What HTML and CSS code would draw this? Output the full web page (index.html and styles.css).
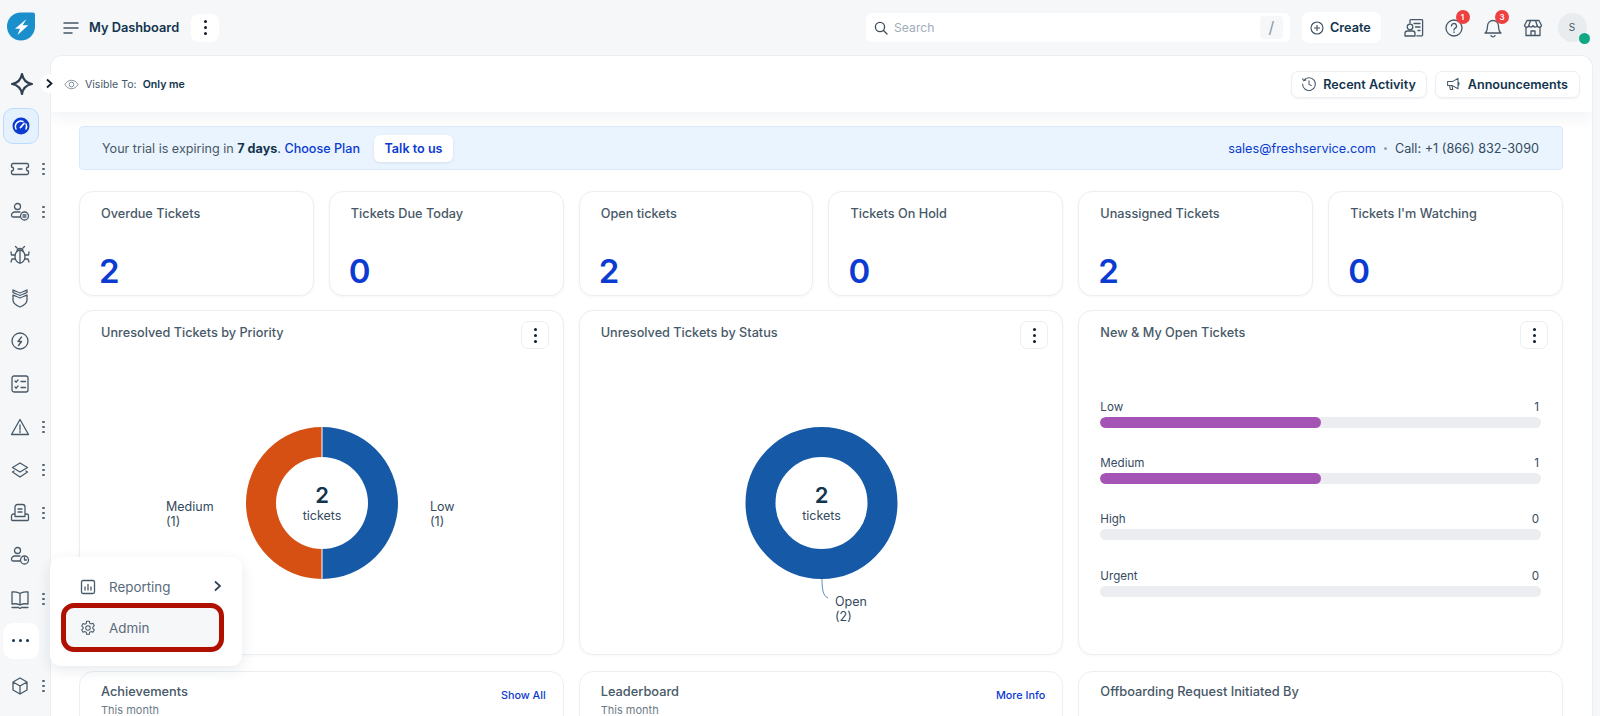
FILE: index.html
```html
<!DOCTYPE html>
<html lang="en">
<head>
<meta charset="utf-8">
<title>My Dashboard</title>
<link rel="stylesheet" href="styles.css">
</head>
<body>
<div class="app">
  <aside class="sidebar">
    <div class="logo-wrap">
      <svg width="28" height="29" viewBox="0 0 28 28"><path d="M14 0h12a2 2 0 0 1 2 2v12A14 14 0 1 1 14 0z" fill="#1a8fcb"/><path d="M19.500 6.500L8 16.300h5l-2.500 6.200L21.300 12.800h-5.600z" fill="#fff"/></svg>
    </div>
    <nav class="nav">
      <div class="nav-item"><svg class="ic" width="24" height="24" viewBox="0 0 24 24"><path d="M12 2c1 6 4 9 10 10-6 1-9 4-10 10-1-6-4-9-10-10 6-1 9-4 10-10z" fill="none" stroke="#2f3f4f" stroke-width="2.200" stroke-linejoin="round"/></svg></div>
      <div class="nav-item active"><svg width="20" height="20" viewBox="0 0 20 20"><circle cx="10" cy="10" r="8.500" fill="#0b3bd0"/><path d="M5 13a5.500 5.500 0 0 1 7-7.500M15 8a5.500 5.500 0 0 1 0 5" fill="none" stroke="#fff" stroke-width="1.500" stroke-linecap="round"/><path d="M9.500 11.500l3.500-4" stroke="#fff" stroke-width="1.800" stroke-linecap="round"/></svg></div>
      <div class="nav-item more"><svg class="ic" width="20" height="20" viewBox="0 0 20 20"><path d="M3 4.500h14a1.500 1.500 0 0 1 1.500 1.500v2a2 2 0 0 0 0 4v2a1.500 1.500 0 0 1-1.500 1.500H3A1.500 1.500 0 0 1 1.500 14v-2a2 2 0 0 0 0-4V6A1.500 1.500 0 0 1 3 4.500zM8 10h4"/></svg><span class="dots"></span></div>
      <div class="nav-item more"><svg class="ic" width="20" height="20" viewBox="0 0 20 20"><circle cx="7.500" cy="4.500" r="3"/><path d="M10 10H5a3.500 3.500 0 0 0-3.500 3.500c0 1 .6 1.500 1.500 1.500h7"/><circle cx="14.500" cy="14" r="4"/><path d="M13 13h3M13 15h3"/></svg><span class="dots"></span></div>
      <div class="nav-item"><svg class="ic" width="20" height="20" viewBox="0 0 20 20"><ellipse cx="10" cy="11.500" rx="5" ry="6.500"/><path d="M7 6.500a3 3 0 0 1 6 0M10 5.500v12.500M5 10H1.500L1 7M15 10h3.500L19 7M5 14H2l-1 3M15 14h3l1 3M7 3L5.500 1.500M13 3l1.500-1.500"/></svg></div>
      <div class="nav-item"><svg class="ic" width="20" height="20" viewBox="0 0 20 20"><path d="M3 7v5c0 3 3 5.500 7 7 4-1.500 7-4 7-7V7c-2 1-5 2-7 3-2-1-5-2-7-3zM3 2c2 1 5 2 7 3 2-1 5-2 7-3v2.500c-2 1-5 2-7 3-2-1-5-2-7-3z"/></svg></div>
      <div class="nav-item"><svg class="ic" width="20" height="20" viewBox="0 0 20 20"><circle cx="10" cy="10" r="8"/><path d="M11.500 6L8 10.500h3.500L8.500 14.500"/></svg></div>
      <div class="nav-item"><svg class="ic" width="20" height="20" viewBox="0 0 20 20"><rect x="2" y="2" width="16" height="16" rx="2"/><path d="M5 7l1.200 1.200L8 6M5 13l1.200 1.200L8 12M11 7.500h4.500M11 13.500h4.500"/></svg></div>
      <div class="nav-item more"><svg class="ic" width="20" height="20" viewBox="0 0 20 20"><path d="M10 2.500L1.500 17.500h17zM10 8v5M10 14.500v1"/></svg><span class="dots"></span></div>
      <div class="nav-item more"><svg class="ic" width="20" height="20" viewBox="0 0 20 20"><path d="M10 3l7.500 4.500L10 12 2.500 7.500zM4 11l-1.500 1 7.500 5 7.500-5-1.500-1"/></svg><span class="dots"></span></div>
      <div class="nav-item more"><svg class="ic" width="20" height="20" viewBox="0 0 20 20"><path d="M5 13V4a2.500 2.500 0 0 1 2.500-2.500h5A2.500 2.500 0 0 1 15 4v9M8 6h4M8 9h4M5 11H3.500A2 2 0 0 0 1.500 13v3.500a1 1 0 0 0 1 1h15a1 1 0 0 0 1-1V13a2 2 0 0 0-2-2H15M5 13.500h10"/></svg><span class="dots"></span></div>
      <div class="nav-item"><svg class="ic" width="20" height="20" viewBox="0 0 20 20"><circle cx="7.500" cy="4.500" r="3"/><path d="M10 10H5a3.500 3.500 0 0 0-3.500 3.500c0 1 .6 1.500 1.500 1.500h7"/><circle cx="14.500" cy="14" r="4"/><path d="M14.500 11.500V14h2"/></svg></div>
      <div class="nav-item more"><svg class="ic" width="20" height="20" viewBox="0 0 20 20"><path d="M10 4.500C8 3 5 2.500 2 3v12c3-.5 6 0 8 1 2-1 5-1.500 8-1V3c-3-.5-6 0-8 1.500zM10 4.500V16M2 18.500h6.500l1.500 1 1.500-1H18"/></svg><span class="dots"></span></div>
      <div class="nav-item current"><span class="hdots"><i></i><i></i><i></i></span></div>
      <div class="nav-item more"><svg class="ic" width="20" height="20" viewBox="0 0 20 20"><path d="M10 2l7 4v8l-7 4-7-4V6zM3 6l7 4 7-4M10 10v8"/></svg><span class="dots"></span></div>
    </nav>
  </aside>

  <div class="right">
    <header class="topbar">
      <svg class="burger" width="16" height="14" viewBox="0 0 16 14"><path d="M1 2h14M1 7h14M1 12h8" fill="none" stroke="#475867" stroke-width="1.500" stroke-linecap="round"/></svg>
      <div class="page-title">My Dashboard</div>
      <button class="kebab-btn plain"><span class="dots dark"></span></button>
      <div class="search">
        <svg width="14" height="14" viewBox="0 0 14 14"><circle cx="6" cy="6" r="4.600" fill="none" stroke="#3d4d5c" stroke-width="1.300"/><path d="M9.500 9.500L13 13" stroke="#3d4d5c" stroke-width="1.300" stroke-linecap="round"/></svg>
        <span class="search-ph">Search</span>
        <span class="slash">/</span>
      </div>
      <button class="create">
        <svg width="14" height="14" viewBox="0 0 14 14"><circle cx="7" cy="7" r="6" fill="none" stroke="#3d4d5c" stroke-width="1.100"/><path d="M7 4v6M4 7h6" stroke="#3d4d5c" stroke-width="1.100"/></svg>
        Create
      </button>
      <div class="top-icons">
        <span class="top-ic"><svg class="ic" width="20" height="20" viewBox="0 0 20 20"><path d="M6 5V2.500a.8.800 0 0 1 .8-.8h11a.8.800 0 0 1 .8.800v14.500a.8.800 0 0 1-.8.800h-5M10 5.500h6M11.500 9h4.500M14 12.500h2"/><circle cx="6" cy="9" r="2.800"/><path d="M1 18v-2.500A2.500 2.500 0 0 1 3.500 13h5a2.500 2.500 0 0 1 2.500 2.500V18z"/></svg></span>
        <span class="top-ic"><svg class="ic" width="20" height="20" viewBox="0 0 20 20"><circle cx="10" cy="10" r="8"/><path d="M7.500 8a2.500 2.500 0 1 1 3.500 2.300c-.7.300-1 .8-1 1.700M10 14v.6"/></svg><b class="badge">1</b></span>
        <span class="top-ic"><svg class="ic" width="20" height="20" viewBox="0 0 20 20"><path d="M10 2.500a5.500 5.500 0 0 0-5.500 5.500c0 5-2.500 7-2.500 7h16s-2.500-2-2.500-7A5.500 5.500 0 0 0 10 2.500zM8 17.500a2.200 2.200 0 0 0 4 0"/></svg><b class="badge">3</b></span>
        <span class="top-ic"><svg class="ic" width="20" height="20" viewBox="0 0 20 20"><path d="M4 2.500h12l2.500 5a2.200 2.200 0 0 1-4.300 0 2.200 2.200 0 0 1-4.200 0 2.200 2.200 0 0 1-4.200 0 2.200 2.200 0 0 1-4.300 0zM3 10v7.500h14V10M8 17.500V13h4v4.500M7.500 2.500L5.800 7.500M12.500 2.500l1.700 5"/></svg></span>
      </div>
      <div class="avatar">S<i class="online"></i></div>
    </header>

    <main class="panel">
      <div class="panel-head">
        <svg width="15" height="15" viewBox="0 0 16 16"><path d="M1 8c1.800-3 4.200-4.500 7-4.500S13.200 5 15 8c-1.800 3-4.200 4.500-7 4.500S2.800 11 1 8z" fill="none" stroke="#7b8a98" stroke-width="1"/><circle cx="8" cy="8" r="2.500" fill="none" stroke="#7b8a98" stroke-width="1"/></svg>
        <span class="vis-label">Visible To:</span>
        <span class="vis-value">Only me</span>
        <button class="head-btn first">
          <svg class="ic" width="16" height="16" viewBox="0 0 20 20"><path d="M3.500 5.500A8 8 0 1 1 2 10M2 3.500l1.500 2.500 2.500-1M10 6v4.500l3 1.500"/></svg>
          Recent Activity
        </button>
        <button class="head-btn">
          <svg class="ic" width="16" height="16" viewBox="0 0 20 20"><path d="M2 7h6l7-4v13l-7-4H2zM4.500 12l1 5h3l-1-5M15 7.500a2.500 2.500 0 0 1 0 4.500"/></svg>
          Announcements
        </button>
      </div>

      <div class="content">
        <section class="trial">
          <span class="trial-text">Your trial is expiring in <b>7 days</b>. <a class="blue-link">Choose Plan</a></span>
          <button class="talk">Talk to us</button>
          <span class="trial-right"><a class="sales">sales@freshservice.com</a><i class="sep"></i><span>Call: +1 (866) 832-3090</span></span>
        </section>

        <section class="kpis">
          <div class="kpi"><div class="kpi-title">Overdue Tickets</div><div class="kpi-num">2</div></div>
          <div class="kpi"><div class="kpi-title">Tickets Due Today</div><div class="kpi-num">0</div></div>
          <div class="kpi"><div class="kpi-title">Open tickets</div><div class="kpi-num">2</div></div>
          <div class="kpi"><div class="kpi-title">Tickets On Hold</div><div class="kpi-num">0</div></div>
          <div class="kpi"><div class="kpi-title">Unassigned Tickets</div><div class="kpi-num">2</div></div>
          <div class="kpi"><div class="kpi-title">Tickets I'm Watching</div><div class="kpi-num">0</div></div>
        </section>

        <section class="charts">
          <div class="card chart-card">
            <div class="card-head"><span class="card-title">Unresolved Tickets by Priority</span><button class="kebab-btn"><span class="dots dark"></span></button></div>
            <svg class="donut" width="484" height="345" viewBox="0 0 484 345">
              <path d="M242 116a76 76 0 0 1 0 152v-30a46 46 0 0 0 0-92z" fill="#165aa7"/>
              <path d="M242 116a76 76 0 0 0 0 152v-30a46 46 0 0 1 0-92z" fill="#d64f13"/>
              <path d="M242 116v30M242 238v30" stroke="#fff" stroke-width="1"/>
              <text class="d-num" x="242" y="192" text-anchor="middle">2</text>
              <text class="d-lab" x="86" y="200">Medium</text>
              <text class="d-lab" x="86" y="215">(1)</text>
              <text class="d-lab" x="350" y="200">Low</text>
              <text class="d-lab" x="350" y="215">(1)</text>
              <text class="d-lab" x="242" y="209" text-anchor="middle">tickets</text>
            </svg>
          </div>
          <div class="card chart-card">
            <div class="card-head"><span class="card-title">Unresolved Tickets by Status</span><button class="kebab-btn"><span class="dots dark"></span></button></div>
            <svg class="donut" width="484" height="345" viewBox="0 0 484 345">
              <circle cx="241.500" cy="192" r="61" fill="none" stroke="#165aa7" stroke-width="30"/>
              <path d="M242 268c0 10 1 17 6 19" fill="none" stroke="#165aa7" stroke-width=".7"/>
              <text class="d-num" x="241.500" y="192" text-anchor="middle">2</text>
              <text class="d-lab" x="241.500" y="209" text-anchor="middle">tickets</text>
              <text class="d-lab" x="255" y="295">Open</text>
              <text class="d-lab" x="255" y="310">(2)</text>
            </svg>
          </div>
          <div class="card chart-card">
            <div class="card-head"><span class="card-title">New &amp; My Open Tickets</span><button class="kebab-btn"><span class="dots dark"></span></button></div>
            <div class="bars">
              <div class="bar-row"><div class="bar-lab"><span>Low</span><span>1</span></div><div class="track"><div class="fill half"></div></div></div>
              <div class="bar-row"><div class="bar-lab"><span>Medium</span><span>1</span></div><div class="track"><div class="fill half"></div></div></div>
              <div class="bar-row"><div class="bar-lab"><span>High</span><span>0</span></div><div class="track"></div></div>
              <div class="bar-row"><div class="bar-lab"><span>Urgent</span><span>0</span></div><div class="track"></div></div>
            </div>
          </div>
        </section>

        <section class="bottom">
          <div class="card low-card"><div><div class="low-title">Achievements</div><div class="low-sub">This month</div></div><a class="low-link">Show All</a></div>
          <div class="card low-card"><div><div class="low-title">Leaderboard</div><div class="low-sub">This month</div></div><a class="low-link">More Info</a></div>
          <div class="card low-card"><div><div class="low-title">Offboarding Request Initiated By</div></div></div>
        </section>
      </div>
    </main>
  </div>

  <button class="collapse"><svg width="9" height="11" viewBox="0 0 9 11"><path d="M2 1.500L6.500 5.500 2 9.500" fill="none" stroke="#12202c" stroke-width="1.800"/></svg></button>

  <div class="popup">
    <div class="pop-row">
      <svg class="ic" width="16" height="16" viewBox="0 0 16 16"><rect x="1.500" y="1.500" width="13" height="13" rx="1.500"/><path d="M5 11V8M8 11V5.500M11 11V8"/></svg>
      <span>Reporting</span>
      <svg class="pop-arrow" width="9" height="12" viewBox="0 0 9 12"><path d="M2 1.500L7 6l-5 4.500" fill="none" stroke="#2f4050" stroke-width="1.700"/></svg>
    </div>
    <div class="pop-row selected">
      <svg class="ic" width="16" height="16" viewBox="0 0 20 20"><circle cx="10" cy="10" r="2.800"/><path d="M8.300 1.500h3.400l.5 2.500 1.600.9 2.400-.8 1.700 3-1.900 1.700v1.800l1.900 1.700-1.700 3-2.400-.8-1.600.9-.5 2.500H8.300l-.5-2.500-1.600-.9-2.400.8-1.700-3 1.900-1.700V9.100L2.100 7.400l1.700-3 2.400.8 1.600-.9z"/></svg>
      <span>Admin</span>
    </div>
  </div>
</div>
</body>
</html>
```
FILE: styles.css
```css
* { box-sizing: border-box; }
html, body { margin: 0; height: 716px; overflow: hidden; }
body { font-family: Inter, "Liberation Sans", sans-serif; color: #12344d; background: #f5f7f9; }
button { font-family: inherit; cursor: pointer; }
svg { display: block; flex: none; }
.ic { fill: none; stroke: #475867; stroke-width: 1.300; stroke-linecap: round; stroke-linejoin: round; }

.app { position: relative; display: flex; width: 1600px; height: 716px; overflow: hidden; }

.sidebar { width: 50px; flex: none; padding-top: 12px; }
.logo-wrap { padding-left: 7px; height: 50px; }
.nav { display: flex; flex-direction: column; }
.nav-item { position: relative; height: 43px; display: flex; align-items: center; padding-left: 10px; }
.nav-item.active, .nav-item.current { width: 36px; height: 36px; margin-left: 3px; padding-left: 7px; border-radius: 10px; }
.nav-item.active { margin-top: 2.500px; margin-bottom: 3.500px; background: #e5f2fd; border: 1px solid #bbdcfe; }
.nav-item.current { margin-top: 2.500px; margin-bottom: 5.500px; background: #fff; padding-left: 9px; }
.hdots { display: flex; gap: 4px; }
.hdots i { width: 3px; height: 3px; border-radius: 50%; background: #12344d; }
.dots { position: absolute; left: 42px; top: 50%; width: 2.500px; height: 2.500px; margin-top: -1px; border-radius: 50%; background: #566676; box-shadow: 0 -5px 0 #566676, 0 5px 0 #566676; }

.right { flex: 1; min-width: 0; display: flex; flex-direction: column; }
.topbar { height: 55px; flex: none; display: flex; align-items: center; padding-left: 13px; }
.burger { margin-right: 10px; }
.page-title { width: 102px; flex: none; font-size: 12.800px; font-weight: 600; color: #12344d; white-space: nowrap; }
.kebab-btn { position: relative; width: 28px; height: 28px; padding: 0; background: #fff; border: 1px solid #ebeff3; border-radius: 7px; flex: none; }
.kebab-btn.plain { border-color: #fff; }
.kebab-btn .dots { left: 12px; }
.dots.dark { width: 3px; height: 3px; margin-top: -1.500px; background: #12202c; box-shadow: 0 -6px 0 #12202c, 0 6px 0 #12202c; }

.search { width: 424px; height: 29px; flex: none; margin-left: 647px; display: flex; align-items: center; gap: 6px; padding: 0 7px 0 8px; background: #fff; border-radius: 6px; font-size: 12.200px; }
.search-ph { color: #a0acb8; flex: 1; }
.slash { width: 23px; height: 23px; line-height: 23px; text-align: center; background: #f5f7f9; border-radius: 4px; color: #8a97a4; font-size: 16px; }
.create { margin-left: 12px; width: 79px; height: 31px; flex: none; display: flex; align-items: center; gap: 6px; padding: 0 0 0 8px; background: #fff; border: 0; border-radius: 7px; font-size: 12.700px; font-weight: 600; color: #12344d; }
.top-icons { display: flex; margin-left: 23px; gap: 19.500px; flex: none; }
.top-ic { position: relative; display: block; width: 20px; height: 20px; }
.badge { position: absolute; left: 12px; top: -8px; width: 14px; height: 14px; border-radius: 50%; background: #ee4040; color: #fff; font-size: 8px; line-height: 14px; text-align: center; font-weight: 600; }
.avatar { position: relative; width: 29px; height: 29px; flex: none; margin-left: 15px; border-radius: 50%; background: #e9ecef; color: #475867; font-size: 10px; line-height: 29px; text-align: center; }
.online { position: absolute; left: 21.500px; top: 19.500px; width: 11px; height: 11px; border-radius: 50%; background: #0fa883; }

.panel { width: 1543px; flex: 1; min-height: 0; background: #fff; border: 1px solid #ebeff3; border-bottom: 0; border-radius: 12px 12px 0 0; overflow: hidden; }
.panel-head { position: relative; height: 56px; display: flex; align-items: center; padding: 0 12px 0 13px; font-size: 10.600px; box-shadow: 0 6px 14px rgba(18, 52, 77, .06); }
.vis-label { margin-left: 6px; color: #475867; }
.vis-value { margin-left: 6px; font-weight: 600; color: #12344d; }
.head-btn { height: 27px; display: flex; align-items: center; gap: 6px; padding: 0 11px 0 10px; margin-left: 8px; background: #fff; border: 1px solid #ebeff3; border-radius: 7px; font-size: 12.600px; font-weight: 600; color: #12344d; box-shadow: 0 1px 2px rgba(18, 52, 77, .06); }
.head-btn.first { margin-left: auto; padding: 0 10px 0 9px; }

.content { padding: 14px 29px 0 28px; background: #fff; }
.trial { height: 44px; display: flex; align-items: center; padding: 0 23px 0 22px; background: #e9f4fe; border: 1px solid #d7eafc; border-radius: 4px; font-size: 12.600px; color: #475867; }
.trial b { font-weight: 700; color: #12344d; }
.blue-link { color: #0b3bd0; font-weight: 500; }
.talk { margin-left: 14px; width: 79px; height: 27px; padding: 0; background: #fff; border: 0; border-radius: 6px; color: #0b3bd0; font-size: 12.600px; font-weight: 600; box-shadow: 0 1px 3px rgba(18, 52, 77, .1); }
.trial-right { margin-left: auto; display: flex; align-items: center; font-size: 12.700px; color: #344b5e; }
.sales { color: #0b3bd0; }
.sep { width: 3px; height: 3px; margin: 0 8px; border-radius: 50%; background: #92a2b1; }

.kpis { margin-top: 21px; display: grid; grid-template-columns: repeat(6, minmax(0, 1fr)); gap: 15px; }
.kpi { height: 105px; padding: 14px 21px; background: #fff; border: 1px solid #ebeff3; border-radius: 14px; box-shadow: 0 1px 3px rgba(18, 52, 77, .05); }
.kpi-title { font-size: 12.700px; font-weight: 500; line-height: 16px; color: #475867; }
.kpi-num { margin-top: 29px; margin-left: -2px; font-size: 33px; font-weight: 600; line-height: 40px; color: #0b3bd0; }

.charts { margin-top: 14px; display: grid; grid-template-columns: repeat(3, minmax(0, 1fr)); gap: 15px; }
.card { background: #fff; border: 1px solid #ebeff3; border-radius: 14px; }
.chart-card { position: relative; height: 345px; box-shadow: 0 1px 3px rgba(18, 52, 77, .04); }
.card-head { position: absolute; left: 0; right: 0; top: 0; display: flex; justify-content: space-between; padding: 10px 14px 0 21px; }
.card-title { margin-top: 4px; font-size: 12.700px; font-weight: 500; line-height: 16px; color: #475867; }
.bars { padding: 87px 21px 0 21px; }
.bar-row { height: 56.200px; }
.bar-lab { display: flex; justify-content: space-between; padding-right: 2px; font-size: 11.600px; line-height: 18px; color: #344b5e; }
.track { height: 11px; margin-top: 1px; border-radius: 6px; background: #ecedf1; overflow: hidden; }
.fill { height: 100%; border-radius: 6px; background: #a354b4; }
.half { width: 50%; }

.d-num { font: 600 22px Inter, sans-serif; fill: #12344d; }
.d-lab { font: 400 12.500px Inter, sans-serif; fill: #344b5e; }

.bottom { margin-top: 16px; display: grid; grid-template-columns: repeat(3, minmax(0, 1fr)); gap: 15px; }
.low-card { height: 80px; display: flex; justify-content: space-between; align-items: flex-start; padding: 11px 17px 11px 21px; }
.low-title { font-size: 12.800px; font-weight: 500; line-height: 18px; color: #475867; }
.low-sub { margin-top: 3px; font-size: 11px; line-height: 13px; color: #6f7c87; }
.low-link { margin-top: 5px; font-size: 10.800px; line-height: 16px; font-weight: 500; color: #0b3bd0; }

.collapse { position: absolute; left: 40px; top: 74px; width: 19px; height: 19px; padding: 0 0 0 5px; border: 0; border-radius: 50%; background: #fff; }
.popup { position: absolute; left: 50px; top: 557px; width: 192px; height: 109px; padding: 10px 23px 0 16px; background: #fff; border-radius: 10px; box-shadow: 0 4px 14px rgba(18, 52, 77, .1); }
.pop-row { position: relative; height: 39px; display: flex; align-items: center; gap: 13px; padding-left: 14px; font-size: 13.400px; color: #5a6b7a; }
.pop-arrow { position: absolute; right: -3px; top: 13px; }
.selected { margin-top: 2px; background: #f5f7f9; border-radius: 8px; outline: 5px solid #b01000; }
```
